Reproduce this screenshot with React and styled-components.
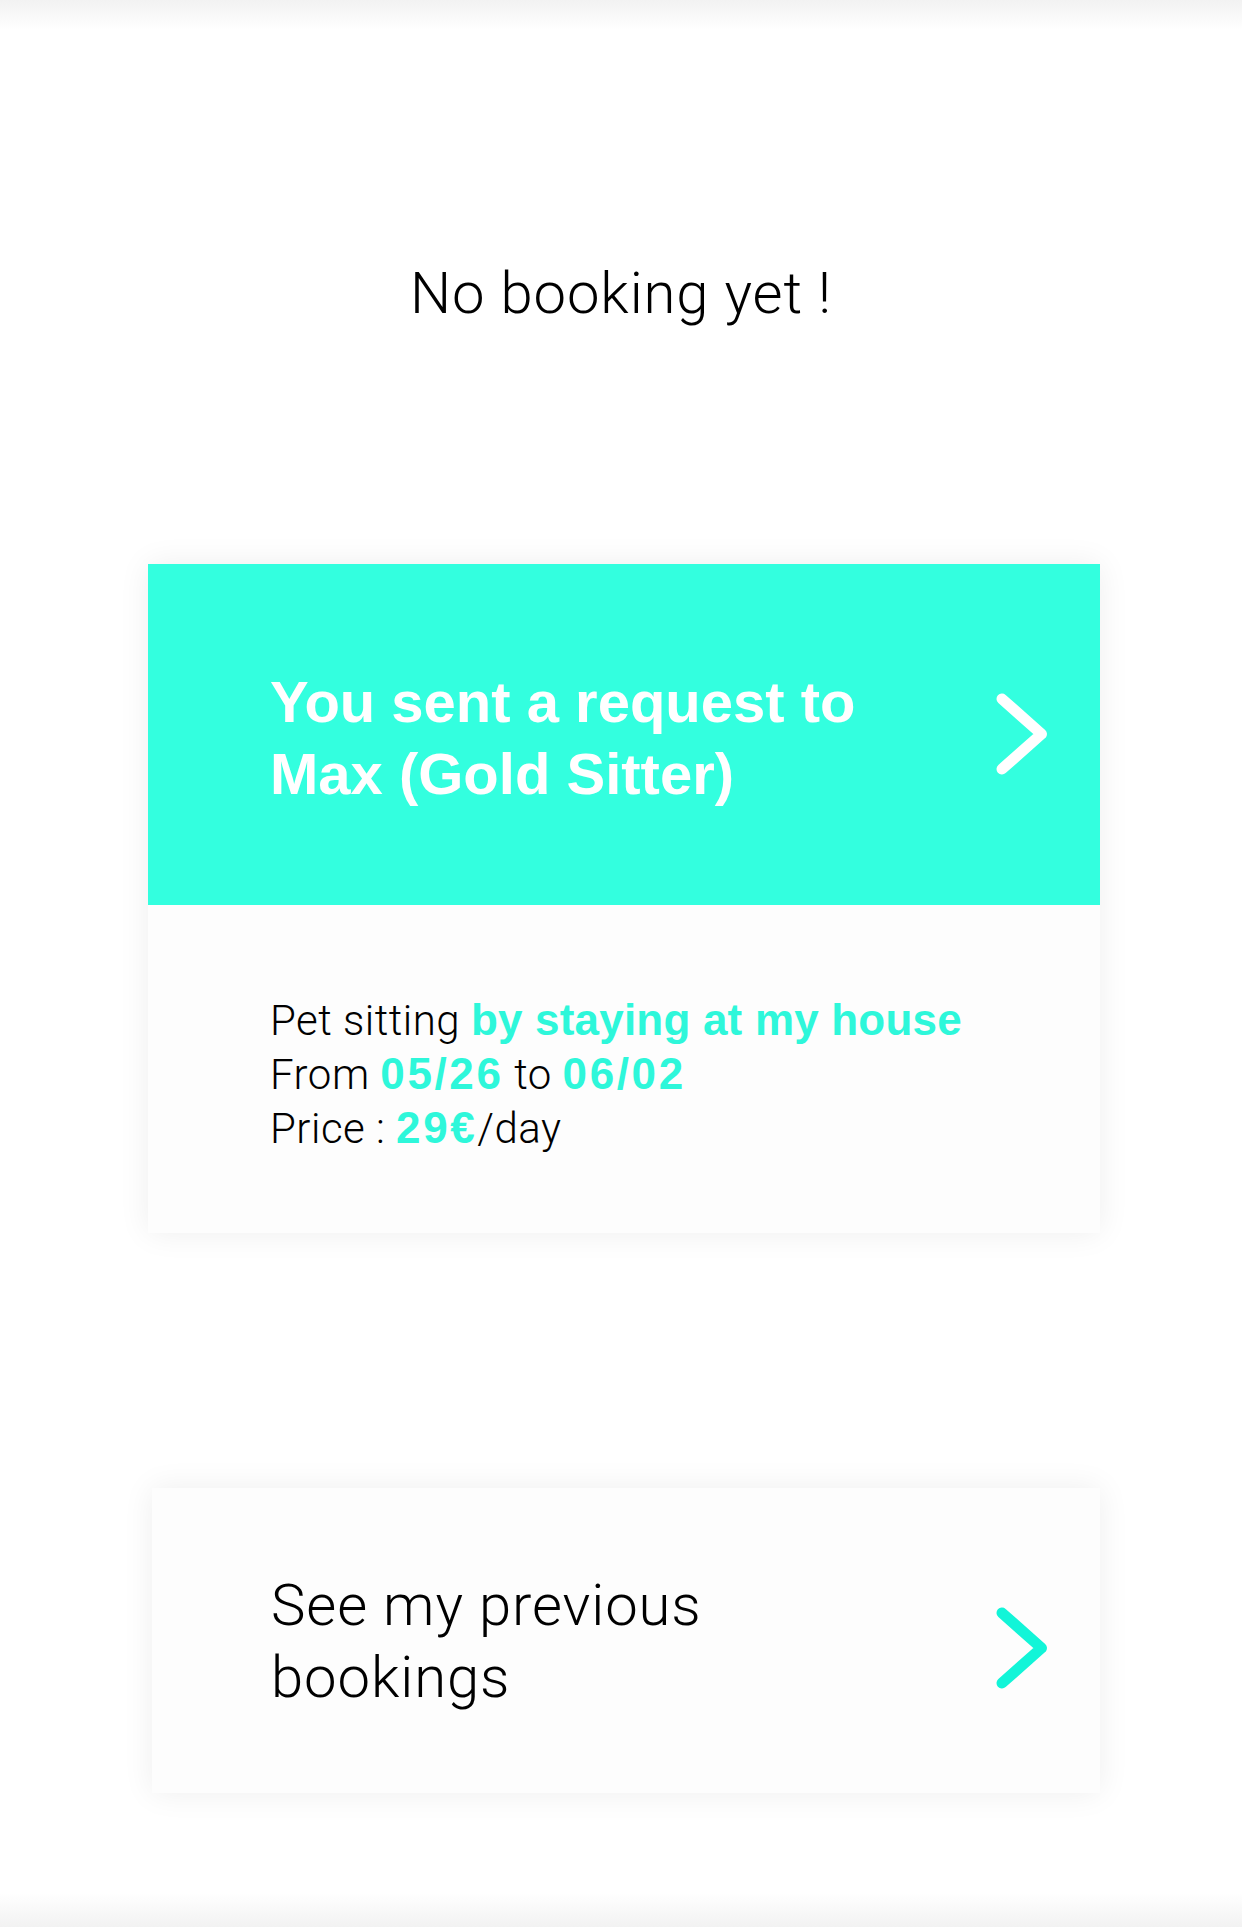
import React from 'react';
import styled, { createGlobalStyle } from 'styled-components';

const TEAL = '#33ffdf';
const TEAL_TEXT = '#2ef7da';
const TEAL_ICON = '#12f5d8';

const GlobalStyle = createGlobalStyle`
  html, body { margin: 0; padding: 0; background: #ffffff; }
  body {
    font-family: Roboto, "Liberation Sans", Arial, sans-serif;
    color: #000000;
    -webkit-font-smoothing: antialiased;
  }
  * { box-sizing: border-box; }
`;

const Page = styled.div`
  min-height: 1927px;
  display: flex;
  flex-direction: column;
  background: #ffffff;
`;

const Shade = styled.div`
  flex-shrink: 0;
  height: ${(p) => p.$h}px;
  margin-top: ${(p) => (p.$bottom ? 'auto' : '0')};
  background: linear-gradient(
    ${(p) => (p.$bottom ? 'to top' : 'to bottom')},
    #f2f2f2 0%,
    rgba(255, 255, 255, 0) 100%
  );
`;

const EmptyTitle = styled.h1`
  margin: 227px 0 0;
  font-size: 58px;
  line-height: 72px;
  font-weight: 300;
  text-align: center;
  letter-spacing: 0.9px;
`;

const Main = styled.main`
  display: flex;
  flex-direction: column;
  padding: 0 142px 0 148px;
`;

const Card = styled.section`
  margin-top: ${(p) => p.$top}px;
  margin-left: ${(p) => p.$inset || 0}px;
  background: #fdfdfd;
  box-shadow: 0 0 30px rgba(0, 0, 0, 0.07);
`;

const RequestHeader = styled.div`
  height: 341px;
  background: ${TEAL};
  display: flex;
  align-items: center;
  justify-content: space-between;
  padding: 6px 52px 0 122px;
`;

const RequestTitle = styled.h2`
  margin: 0;
  max-width: 640px;
  font-family: "Liberation Sans", Arial, sans-serif;
  font-size: 58px;
  line-height: 72px;
  font-weight: 700;
  color: #ffffff;
  letter-spacing: 0;
`;

const Details = styled.div`
  padding: 89px 0 77px 122px;
  font-size: 42px;
  font-weight: 300;
  letter-spacing: 0.5px;
`;

const Line = styled.div`
  height: 54px;
  line-height: 54px;
  white-space: nowrap;
`;

const Accent = styled.span`
  color: ${TEAL_TEXT};
  font-family: "Liberation Sans", Arial, sans-serif;
  font-size: 44px;
  line-height: 40px;
  font-weight: 700;
  letter-spacing: ${(p) => (p.$numeric ? '2.6px' : '0.2px')};
`;

const HistoryLink = styled.div`
  height: 305px;
  display: flex;
  align-items: center;
  justify-content: space-between;
  padding: 0 52px 0 119px;
`;

const HistoryText = styled.span`
  max-width: 540px;
  font-size: 58px;
  line-height: 72px;
  font-weight: 300;
  letter-spacing: 0.9px;
`;

const ChevronWrap = styled.span`
  display: flex;
  margin-top: ${(p) => p.$shift || 0}px;
`;

const Chevron = ({ color }) => (
  <svg width="52" height="82" viewBox="0 0 52 82" fill="none">
    <path
      d="M6 6 L45.5 41 L6 76"
      stroke={color}
      strokeWidth="11"
      strokeLinecap="round"
      strokeLinejoin="round"
    />
  </svg>
);

export default function App() {
  return (
    <>
      <GlobalStyle />
      <Page>
        <Shade $h={30} />
        <EmptyTitle>No booking yet !</EmptyTitle>
        <Main>
          <Card $top={235}>
            <RequestHeader>
              <RequestTitle>You sent a request to Max (Gold Sitter)</RequestTitle>
              <ChevronWrap $shift={-8}>
                <Chevron color="#ffffff" />
              </ChevronWrap>
            </RequestHeader>
            <Details>
              <Line>
                Pet sitting <Accent>by staying at my house</Accent>
              </Line>
              <Line>
                From <Accent $numeric>05/26</Accent> to <Accent $numeric>06/02</Accent>
              </Line>
              <Line>
                Price : <Accent $numeric>29€</Accent>/day
              </Line>
            </Details>
          </Card>
          <Card $top={255} $inset={4}>
            <HistoryLink>
              <HistoryText>See my previous bookings</HistoryText>
              <ChevronWrap $shift={14}>
                <Chevron color={TEAL_ICON} />
              </ChevronWrap>
            </HistoryLink>
          </Card>
        </Main>
        <Shade $h={34} $bottom />
      </Page>
    </>
  );
}
